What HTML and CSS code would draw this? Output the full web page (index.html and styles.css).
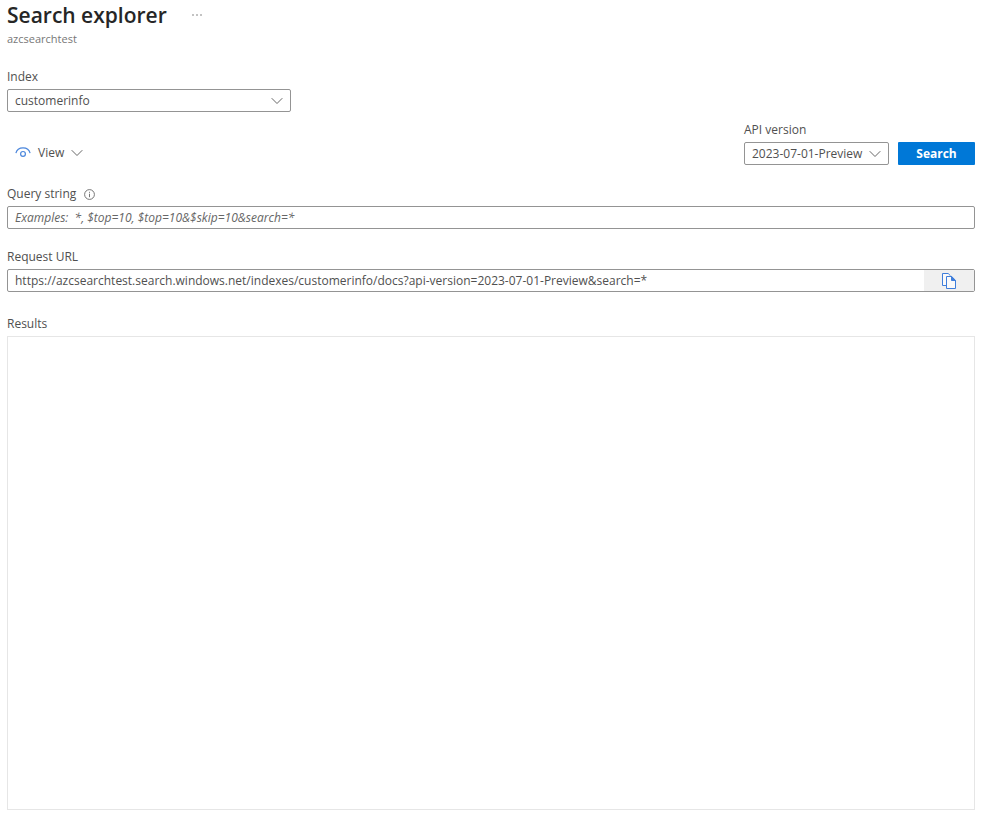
FILE: index.html
```html
<!DOCTYPE html>
<html lang="en">
<head>
  <meta charset="UTF-8">
  <meta name="viewport" content="width=device-width, initial-scale=1.0">
  <title>Search explorer</title>
  <link rel="stylesheet" href="styles.css">
</head>
<body>
  <header class="header">
    <div class="title-row">
      <h1>Search explorer</h1>
      <button type="button" class="more" aria-label="More">
        <svg width="12" height="4" viewBox="0 0 12 4" fill="#777"><circle cx="2" cy="2" r="0.8"/><circle cx="6" cy="2" r="0.8"/><circle cx="10" cy="2" r="0.8"/></svg>
      </button>
    </div>
    <p class="subtitle">azcsearchtest</p>
  </header>

  <main class="content">
    <div class="field index-field">
      <label for="index">Index</label>
      <div class="select-box">
        <select id="index">
          <option>customerinfo</option>
        </select>
        <svg class="chevron" width="12" height="8" viewBox="0 0 12 8"><path d="M0.7 1.2L6 6.5l5.3-5.3"/></svg>
      </div>
    </div>

    <div class="toolbar">
      <button type="button" class="view-button">
        <!-- eye icon -->
        <svg width="16" height="12" viewBox="0 0 16 12" fill="none" stroke="#4a86dc" stroke-width="1.2"><path d="M0.9 6.1C1.7 2.8 4.5 0.9 8 0.9s6.3 1.9 7.1 5.2"/><circle cx="8" cy="6.9" r="2.4"/></svg>
        <span>View</span>
        <svg class="chevron" width="12" height="8" viewBox="0 0 12 8"><path d="M0.7 1.2L6 6.5l5.3-5.3"/></svg>
      </button>
      <div class="field api-field">
        <label for="apiVersion">API version</label>
        <div class="select-box">
          <select id="apiVersion">
            <option>2023-07-01-Preview</option>
          </select>
          <svg class="chevron" width="12" height="8" viewBox="0 0 12 8"><path d="M0.7 1.2L6 6.5l5.3-5.3"/></svg>
        </div>
      </div>
      <button type="submit" class="search-button">Search</button>
    </div>

    <div class="field query-field">
      <div class="label-row">
        <label for="query">Query string</label>
        <svg width="11" height="11" viewBox="0 0 11 11" fill="none" stroke="#666" stroke-width="0.9"><circle cx="5.5" cy="5.5" r="4.9"/><path d="M5.5 4.7v3.5M5.5 2.8v1"/></svg>
      </div>
      <input type="text" id="query" class="text-box" placeholder="Examples:  *, $top=10, $top=10&amp;$skip=10&amp;search=*">
    </div>

    <div class="field url-field">
      <label for="url">Request URL</label>
      <div class="copy-box">
        <input type="text" id="url" readonly value="https://azcsearchtest.search.windows.net/indexes/customerinfo/docs?api-version=2023-07-01-Preview&amp;search=*">
        <button type="button" class="copy-button" aria-label="Copy">
          <svg width="14" height="16" viewBox="0 0 14 16" fill="#fafafa" stroke="#3f7edb"><path d="M4.5 12.5h-4V0.5h5.7L8.5 2.8"/><path d="M4.5 3.5h5.2l3.8 3.8v8.2h-9z"/><path d="M9.5 3.5v4h4z" fill="#3f7edb"/></svg>
        </button>
      </div>
    </div>

    <section class="field results-field">
      <h2>Results</h2>
      <div class="results"></div>
    </section>
  </main>
</body>
</html>
```

FILE: styles.css
```css
* {
  box-sizing: border-box;
}

body {
  display: flex;
  flex-direction: column;
  min-height: 100vh;
  margin: 0;
  padding: 0 24px 8px 7px;
  font-family: "Open Sans", "Noto Sans", sans-serif;
  font-size: 12px;
  line-height: 18px;
  color: #505050;
  background-color: #fff;
}

button,
input,
select {
  font: inherit;
  color: inherit;
  border: none;
  margin: 0;
  padding: 0;
  background: none;
}

button {
  display: flex;
  align-items: center;
  justify-content: center;
  cursor: pointer;
}

/* Page header */
.title-row {
  display: flex;
  align-items: center;
  gap: 24px;
}

h1 {
  margin: 0;
  font-size: 21px;
  font-weight: 600;
  line-height: 30px;
  color: #262626;
}

.subtitle {
  margin: 0;
  font-size: 11px;
  color: #777;
}

/* Form */
.content {
  display: flex;
  flex-direction: column;
  flex: 1;
  padding-top: 20px;
}

.field {
  display: flex;
  flex-direction: column;
  gap: 3px;
}

.index-field {
  width: 284px;
}

.select-box {
  display: grid;
  align-items: center;
}

.select-box select,
.select-box .chevron {
  grid-area: 1 / 1;
}

.select-box .chevron {
  justify-self: end;
  margin-right: 8px;
  pointer-events: none;
}

.chevron {
  fill: none;
  stroke: #666;
}

.select-box select,
.text-box,
.copy-box {
  width: 100%;
  height: 23px;
  border: 1px solid #949494;
  border-radius: 2px;
}

.select-box select {
  appearance: none;
  padding: 0 7px;
}

.toolbar {
  display: flex;
  align-items: flex-end;
  margin-top: 9px;
}

.view-button {
  gap: 7px;
  height: 24px;
  margin-left: 8px;
}

.api-field {
  width: 145px;
  margin-left: auto;
}

.search-button {
  width: 77px;
  height: 23px;
  margin-left: 9px;
  border-radius: 1px;
  font-weight: 700;
  color: #fff;
  background-color: #0078d7;
}

.query-field {
  margin-top: 20px;
}

.url-field {
  margin-top: 19px;
}

.label-row {
  display: flex;
  align-items: center;
  gap: 8px;
}

.text-box {
  padding: 0 7px;
}

.text-box::placeholder {
  font-style: italic;
  color: #666;
  opacity: 1;
}

.copy-box {
  display: flex;
}

.copy-box input {
  flex: 1;
  padding: 0 7px;
}

.copy-button {
  width: 50px;
  background-color: #f0f0f0;
}

.results-field {
  flex: 1;
  margin-top: 23px;
}

h2 {
  margin: 0;
  font-size: 12px;
  font-weight: 400;
}

.results {
  flex: 1;
  border: 1px solid #e6e6e6;
}
```
